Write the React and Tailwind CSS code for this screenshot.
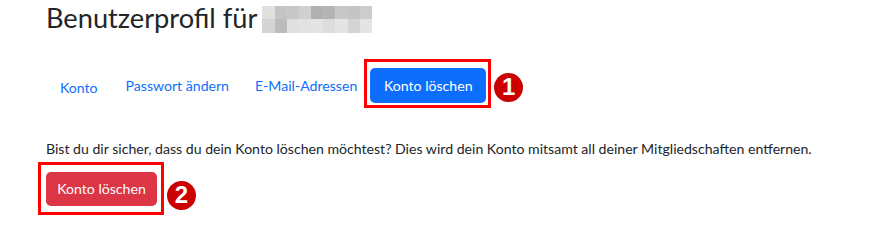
import React from 'react';

// pixelated (blurred) user name next to the heading
const blurRows = [
  ['#e0e0e0', '#c4c4c4', '#c8c8c8', '#d0d0d0', '#b0b0b0', '#b4b4b4', '#c8c8c8', '#c4c4c4', '#cccccc'],
  ['#d4d4d4', '#bcbcbc', '#e0e0e0', '#e4e2e0', '#e4e4e4', '#dcdcdc', '#e4e4e4', '#d4d4d4', '#e4e4e4'],
];

const Marker = ({ n, className }) => (
  <span
    className={
      'absolute flex h-[29px] w-[29px] items-center justify-center rounded-full bg-[#cc0000] text-[24px] font-bold leading-none text-white ' +
      className
    }
    style={{ fontFamily: '"Liberation Sans", Arial, sans-serif' }}
  >
    {n}
  </span>
);

const App = () => {
  return (
    <div
      className="h-[250px] w-[889px] bg-white pl-[46px] text-[14.1px] text-[#212529]"
      style={{ fontFamily: 'Lato, "Noto Sans", sans-serif' }}
    >
      {/* Header */}
      <h1 className="flex items-center pt-[2px] text-[27.2px] font-normal leading-[1.2]">
        <span>Benutzerprofil für</span>
        <span className="ml-[5px] mt-[2px] flex flex-col">
          {blurRows.map((row, i) => (
            <span key={i} className="flex">
              {row.map((c, j) => (
                <span key={j} className="block h-[13.5px] w-[12.2px]" style={{ background: c }} />
              ))}
            </span>
          ))}
        </span>
      </h1>

      {/* Tabs */}
      <nav className="mt-[33px] flex items-center text-[#0d6efd]">
        <a className="pl-[14px] pr-[14px] pt-[5px]">Konto</a>
        <a className="pl-[14px] pr-[13px]">Passwort ändern</a>
        <a className="pl-[13px] pr-[13px]">E-Mail-Adressen</a>
        <div className="relative">
          <span className="pointer-events-none absolute -bottom-[5px] -left-[6px] -right-[5px] -top-[9px] border-[3px] border-[#ff0000]" />
          <button className="flex h-[35px] w-[116px] items-center justify-center rounded-[5px] bg-[#0d6efd] text-white">
            Konto löschen
          </button>
          <Marker n="1" className="left-[124px] top-[5px]" />
        </div>
      </nav>

      {/* Content */}
      <p className="mt-[35px]">
        Bist du dir sicher, dass du dein Konto löschen möchtest? Dies wird dein Konto mitsamt all deiner Mitgliedschaften entfernen.
      </p>

      <div className="relative mt-[13px] inline-block">
        <span className="pointer-events-none absolute -bottom-[9px] -left-[8px] -right-[7px] -top-[10px] border-[3px] border-[#ff0000]" />
        <button className="flex h-[34px] w-[111px] items-center justify-center rounded-[5px] bg-[#dc3545] text-white">
          Konto löschen
        </button>
        <Marker n="2" className="left-[121px] top-[9px]" />
      </div>
    </div>
  );
};

export default App;
